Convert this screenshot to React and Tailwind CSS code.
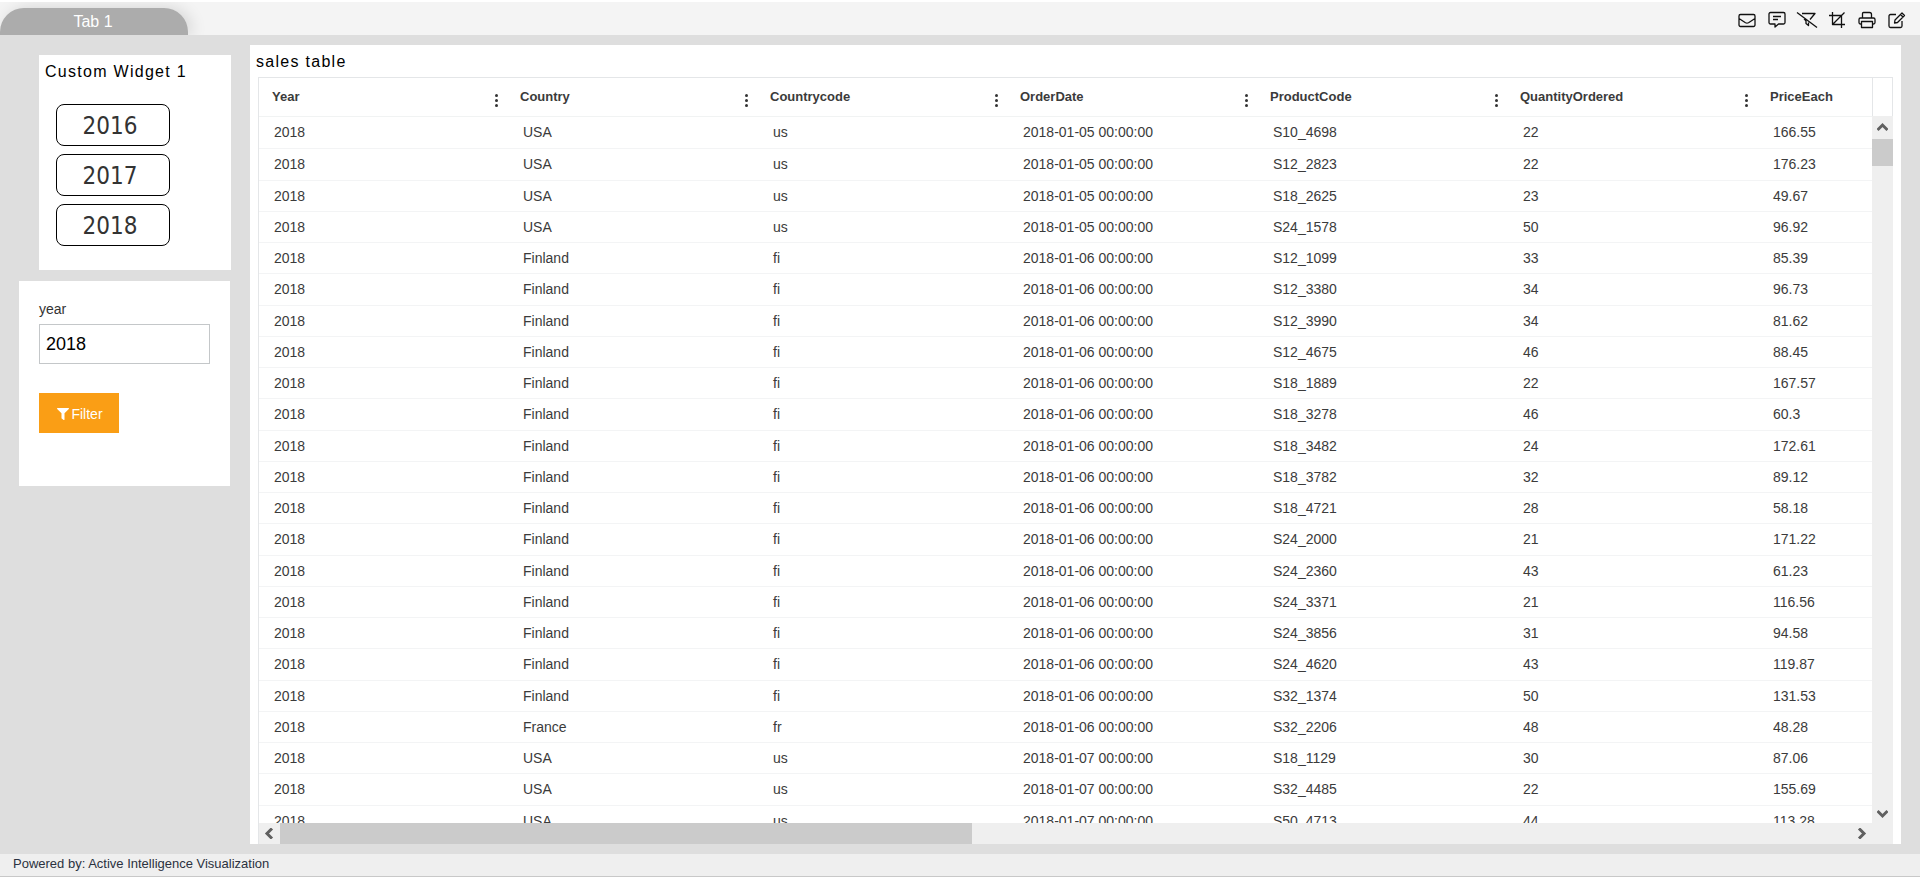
import { useState } from "react";
import { FaFilter } from "react-icons/fa";

const COLUMNS = ["Year", "Country", "Countrycode", "OrderDate", "ProductCode", "QuantityOrdered", "PriceEach"];

const YEARS = ["2016", "2017", "2018"];

const ROWS = [
  ["2018", "USA", "us", "2018-01-05 00:00:00", "S10_4698", "22", "166.55"],
  ["2018", "USA", "us", "2018-01-05 00:00:00", "S12_2823", "22", "176.23"],
  ["2018", "USA", "us", "2018-01-05 00:00:00", "S18_2625", "23", "49.67"],
  ["2018", "USA", "us", "2018-01-05 00:00:00", "S24_1578", "50", "96.92"],
  ["2018", "Finland", "fi", "2018-01-06 00:00:00", "S12_1099", "33", "85.39"],
  ["2018", "Finland", "fi", "2018-01-06 00:00:00", "S12_3380", "34", "96.73"],
  ["2018", "Finland", "fi", "2018-01-06 00:00:00", "S12_3990", "34", "81.62"],
  ["2018", "Finland", "fi", "2018-01-06 00:00:00", "S12_4675", "46", "88.45"],
  ["2018", "Finland", "fi", "2018-01-06 00:00:00", "S18_1889", "22", "167.57"],
  ["2018", "Finland", "fi", "2018-01-06 00:00:00", "S18_3278", "46", "60.3"],
  ["2018", "Finland", "fi", "2018-01-06 00:00:00", "S18_3482", "24", "172.61"],
  ["2018", "Finland", "fi", "2018-01-06 00:00:00", "S18_3782", "32", "89.12"],
  ["2018", "Finland", "fi", "2018-01-06 00:00:00", "S18_4721", "28", "58.18"],
  ["2018", "Finland", "fi", "2018-01-06 00:00:00", "S24_2000", "21", "171.22"],
  ["2018", "Finland", "fi", "2018-01-06 00:00:00", "S24_2360", "43", "61.23"],
  ["2018", "Finland", "fi", "2018-01-06 00:00:00", "S24_3371", "21", "116.56"],
  ["2018", "Finland", "fi", "2018-01-06 00:00:00", "S24_3856", "31", "94.58"],
  ["2018", "Finland", "fi", "2018-01-06 00:00:00", "S24_4620", "43", "119.87"],
  ["2018", "Finland", "fi", "2018-01-06 00:00:00", "S32_1374", "50", "131.53"],
  ["2018", "France", "fr", "2018-01-06 00:00:00", "S32_2206", "48", "48.28"],
  ["2018", "USA", "us", "2018-01-07 00:00:00", "S18_1129", "30", "87.06"],
  ["2018", "USA", "us", "2018-01-07 00:00:00", "S32_4485", "22", "155.69"],
  ["2018", "USA", "us", "2018-01-07 00:00:00", "S50_4713", "44", "113.28"],
];

// toolbar glyphs, all drawn on a 22x18 box
const TOOLS = [
  { label: "Email", d: "M4.500 3.500h13a1.500 1.500 0 0 1 1.500 1.500v9a1.500 1.500 0 0 1-1.500 1.500h-13a1.500 1.500 0 0 1-1.500-1.500v-9a1.500 1.500 0 0 1 1.500-1.500zM3 7.500l6.500 4.200q1.500 .8 3 0L19 7.500" },
  { label: "Comments", d: "M4.500 1.500h13a1.500 1.500 0 0 1 1.500 1.500v8.500a1.500 1.500 0 0 1-1.500 1.500h-5l-3.500 3v-3h-4.500a1.500 1.500 0 0 1-1.500-1.500v-8.500a1.500 1.500 0 0 1 1.500-1.500zM7 5.500h8M7 8.500h5" },
  { label: "Clear filters", d: "M6 2.500h13l-5 6M8 7.500l2 2.500v2.500l2.500 2v-3M1 1.500l20 15" },
  { label: "Crop", d: "M6.500 1v12.500H19M3 4.500h12.500V17M6.500 13.500L18.500 1.500" },
  { label: "Print", d: "M6.500 7V2.500a1 1 0 0 1 1-1h6a2 2 0 0 1 2 2V7M5.500 13H4.500a1.500 1.500 0 0 1-1.500-1.500V8.500a1.500 1.500 0 0 1 1.500-1.500h13a1.500 1.500 0 0 1 1.500 1.500v3a1.500 1.500 0 0 1-1.500 1.500h-1M5.500 10.500h11v6h-11z" },
  { label: "Edit", d: "M10 3.500H4.500a1.500 1.500 0 0 0-1.500 1.500v10a1.500 1.500 0 0 0 1.500 1.500h10a1.500 1.500 0 0 0 1.500-1.500V10M16 2l2.500 2.500L11.500 11.500L8.500 12l.5-3zM14.500 3.500l2.500 2.500" },
];

function Chevron({ className }) {
  return (
    <svg width="11" height="11" viewBox="0 0 11 11" fill="none" stroke="#606060" strokeWidth="3" className={className}>
      <path d="M0.500 8L5.500 3l5 5" />
    </svg>
  );
}

function TopBar() {
  return (
    <header className="flex h-[35px] shrink-0 items-end justify-between overflow-hidden border-t-2 border-white bg-[#f4f4f4]">
      <button className="h-[27px] w-[188px] rounded-t-[24px] bg-[#acacac] pr-[2px] text-base leading-[26px] text-white shadow-[4px_0_16px_#00000022]">
        Tab 1
      </button>
      <div className="flex h-full items-center pt-[2px] pr-2">
        {TOOLS.map(({ label, d }) => (
          <button key={label} aria-label={label} className="flex w-[30px] justify-center text-[#111]">
            <svg width="22" height="18" viewBox="0 0 22 18" fill="none" stroke="currentColor" strokeWidth="1.3" strokeLinejoin="round">
              <path d={d} />
            </svg>
          </button>
        ))}
      </div>
    </header>
  );
}

function YearWidget({ onPick }) {
  return (
    <section className="ml-5 h-[215px] w-48 bg-white px-[6px] pt-[5px]">
      <h2 className="text-base leading-6 tracking-[0.08em] text-black">Custom Widget 1</h2>
      <div className="mt-5 ml-[11px] flex flex-col gap-2">
        {YEARS.map(y => (
          <button key={y} onClick={() => onPick(y)}
            className="h-[42px] w-[114px] rounded-lg border border-black pt-[2px] pr-[6px] font-['DejaVu_Sans_Condensed','DejaVu_Sans',sans-serif] text-2xl text-[#333]">
            {y}
          </button>
        ))}
      </div>
    </section>
  );
}

function FilterForm({ year, setYear }) {
  return (
    <form onSubmit={e => e.preventDefault()} className="h-[205px] w-[211px] bg-white px-5 pt-[18px]">
      <label htmlFor="year" className="block text-sm text-[#333]">year</label>
      <input id="year" value={year} onChange={e => setYear(e.target.value)}
        className="mt-[5px] block h-10 w-full border border-[#c4c7c9] px-[6px] text-lg text-black outline-none" />
      <button type="submit" className="mt-[29px] flex h-10 w-20 items-center justify-center gap-[2px] bg-[#fa9e15] pt-[2px] pl-[2px] text-sm text-white">
        <FaFilter size={12} />Filter
      </button>
    </form>
  );
}

function SalesTable() {
  return (
    <section className="flex min-w-0 flex-1 flex-col bg-white pr-2 pl-2">
      <h2 className="-ml-[2px] h-8 pt-[2px] text-base leading-[30px] tracking-[0.08em] text-black">sales table</h2>
      <div className="flex min-h-0 flex-1 flex-col border-t border-l border-[#e4e6e8]">
        <div className="flex min-h-0 flex-1">
          <div className="min-w-0 flex-1 overflow-hidden">
            <table className="w-[1749px] table-fixed border-separate border-spacing-0 text-left text-[#3b3b3b]">
              <thead>
                <tr className="h-[39px]">
                  {COLUMNS.map(col => (
                    <th key={col} scope="col" className="w-[250px] border-b border-[#f1f3f3] p-0 first:w-[249px] first:pl-px">
                      <div className="flex items-center justify-between pr-[10px] pl-3">
                        <span className="text-[13px] font-bold">{col}</span>
                        <button aria-label={`${col} menu`} className="mt-[6px] flex flex-col gap-[2px]">
                          <i className="size-[3px] rounded-full bg-[#333]" />
                          <i className="size-[3px] rounded-full bg-[#333]" />
                          <i className="size-[3px] rounded-full bg-[#333]" />
                        </button>
                      </div>
                    </th>
                  ))}
                </tr>
              </thead>
              <tbody>
                {ROWS.map((row, i) => (
                  <tr key={i} className="h-[31px] first:h-8 nth-[4n+2]:h-8">
                    {row.map((cell, j) => (
                      <td key={j} className="border-b border-[#f3f4f5] p-0 pb-px pl-[15px] text-sm">{cell}</td>
                    ))}
                  </tr>
                ))}
              </tbody>
            </table>
          </div>

          {/* Vertical scrollbar */}
          <div className="flex w-[21px] flex-col items-center bg-[#efefef]">
            <div className="h-[38px] w-full border-r border-l border-[#e4e6e8] bg-white" />
            <Chevron className="my-[6px] shrink-0" />
            <div className="h-[27px] w-full bg-[#cbcbcb]" />
            <Chevron className="mt-auto mb-1 rotate-180" />
          </div>
        </div>

        {/* Horizontal scrollbar */}
        <div className="flex h-[21px] shrink-0 items-center bg-[#efefef]">
          <Chevron className="mx-[5px] -rotate-90" />
          <div className="h-full w-[692px] bg-[#cbcbcb]" />
          <Chevron className="mr-[26px] ml-auto rotate-90" />
        </div>
      </div>
    </section>
  );
}

export default function App() {
  const [year, setYear] = useState("2018");

  return (
    <div className="flex h-screen flex-col bg-[#dedede] font-['Liberation_Sans',Arial,sans-serif]">
      <TopBar />
      <main className="flex min-h-0 flex-1 pt-[10px] pr-[19px] pb-[10px] pl-[19px]">
        <aside className="flex w-[231px] shrink-0 flex-col gap-[11px] pt-[10px]">
          <YearWidget onPick={setYear} />
          <FilterForm year={year} setYear={setYear} />
        </aside>
        <SalesTable />
      </main>
      <footer className="h-[23px] shrink-0 border-b border-[#c8c8c8] bg-[#efefef] pl-[13px] text-[13px] leading-5 text-[#2b3240]">
        Powered by: Active Intelligence Visualization
      </footer>
    </div>
  );
}
